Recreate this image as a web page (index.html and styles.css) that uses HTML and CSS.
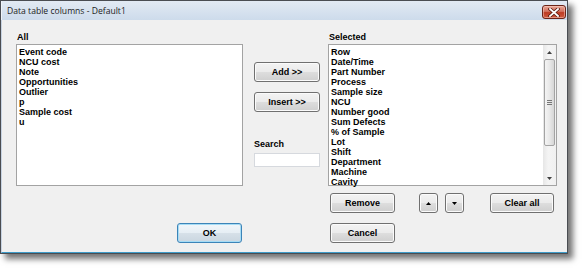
FILE: index.html
```html
<!DOCTYPE html>
<html>
<head>
<meta charset="utf-8">
<title>Data table columns</title>
<link rel="stylesheet" href="styles.css">
</head>
<body>
<div class="window">
  <div class="titlebar">
    <span class="title">Data table columns - Default1</span>
    <div class="close">
      <svg width="12" height="9" viewBox="0 0 12 9"><path d="M2 1 L10 8 M10 1 L2 8" stroke="#5a1a10" stroke-width="3.4" stroke-linecap="square"/><path d="M2 1 L10 8 M10 1 L2 8" stroke="#ffffff" stroke-width="1.8" stroke-linecap="square"/></svg>
    </div>
  </div>
  <div class="client">
    <div class="col-left">
      <div class="label">All</div>
      <div class="listbox left-list">
        <div class="item">Event code</div>
        <div class="item">NCU cost</div>
        <div class="item">Note</div>
        <div class="item">Opportunities</div>
        <div class="item">Outlier</div>
        <div class="item">p</div>
        <div class="item">Sample cost</div>
        <div class="item">u</div>
      </div>
      <button class="btn ok">OK</button>
    </div>
    <div class="col-mid">
      <button class="btn mid-btn add">Add &gt;&gt;</button>
      <button class="btn mid-btn insert">Insert &gt;&gt;</button>
      <div class="search-label">Search</div>
      <div class="search"></div>
    </div>
    <div class="col-right">
      <div class="label">Selected</div>
      <div class="listbox right-list">
        <div class="items">
          <div class="item">Row</div>
          <div class="item">Date/Time</div>
          <div class="item">Part Number</div>
          <div class="item">Process</div>
          <div class="item">Sample size</div>
          <div class="item">NCU</div>
          <div class="item">Number good</div>
          <div class="item">Sum Defects</div>
          <div class="item">% of Sample</div>
          <div class="item">Lot</div>
          <div class="item">Shift</div>
          <div class="item">Department</div>
          <div class="item">Machine</div>
          <div class="item">Cavity</div>
        </div>
        <div class="scrollbar">
          <div class="sb-arrow"><svg width="5" height="3" viewBox="0 0 5 3"><path d="M0 3 L2.5 0 L5 3 Z" fill="#404040"/></svg></div>
          <div class="sb-thumb"><span class="grip"></span><span class="grip"></span><span class="grip"></span></div>
          <div class="sb-track"></div>
          <div class="sb-arrow"><svg width="5" height="3" viewBox="0 0 5 3"><path d="M0 0 L5 0 L2.5 3 Z" fill="#404040"/></svg></div>
        </div>
      </div>
      <div class="row-buttons">
        <button class="btn remove">Remove</button>
        <button class="btn small up"><svg width="5" height="3" viewBox="0 0 5 3"><path d="M0 3 L2.5 0 L5 3 Z" fill="#000"/></svg></button>
        <button class="btn small down"><svg width="5" height="3" viewBox="0 0 5 3"><path d="M0 0 L5 0 L2.5 3 Z" fill="#000"/></svg></button>
        <button class="btn clear">Clear all</button>
      </div>
      <button class="btn cancel">Cancel</button>
    </div>
  </div>
</div>
</body>
</html>
```
FILE: styles.css
```css
* { box-sizing: border-box; }
html, body { margin: 0; padding: 0; background: #ffffff; }
body { width: 584px; height: 270px; overflow: hidden; }

.window {
  width: 568px;
  height: 254px;
  border: 1px solid #4a4d52;
  background: #f0f0f0;
  box-shadow: 5px 5px 6px rgba(0,0,0,0.55);
  display: flex;
  flex-direction: column;
}

.titlebar {
  height: 19px;
  flex: none;
  display: flex;
  align-items: center;
  background: linear-gradient(#e2eaf3, #cddbeb);
  border-left: 1px solid #eef3f9;
  padding-left: 5px;
}
.title {
  font-family: "Open Sans", "Noto Sans", sans-serif;
  font-size: 8.6px;
  color: #1c1c1c;
}
.close {
  margin-left: auto;
  margin-right: 1px;
  margin-top: 3px;
  width: 24px;
  height: 14px;
  border: 1px solid #6b2418;
  border-radius: 3px;
  background: linear-gradient(#e9a696 0%, #d27260 45%, #bd3b23 55%, #d05a40 100%);
  box-shadow: inset 0 0 0 1px rgba(255,220,210,0.45);
  display: flex;
  align-items: center;
  justify-content: center;
}

.client {
  flex: 1;
  display: flex;
  padding-left: 14px;
  border-left: 1px solid #c7d3e2;
  border-bottom: 1px solid #3d9bc8;
  font-family: "Liberation Sans", Arial, sans-serif;
  font-size: 9px;
  font-weight: bold;
  color: #000;
}

.label {
  height: 12px;
  line-height: 12px;
  margin-top: 11px;
  margin-bottom: 1px;
  padding-left: 1px;
}

.listbox {
  background: #ffffff;
  border: 1px solid #a3a3a3;
  height: 142px;
}
.item {
  line-height: 10px;
  height: 10px;
  white-space: nowrap;
}

.col-left {
  width: 227px;
  display: flex;
  flex-direction: column;
}
.left-list { padding: 2px 0 0 2px; }

.col-mid {
  width: 67px;
  margin-left: 10px;
  display: flex;
  flex-direction: column;
}

.col-right {
  width: 229px;
  margin-left: 8px;
  display: flex;
  flex-direction: column;
}
.right-list {
  display: flex;
}
.right-list .items {
  flex: 1;
  padding: 2px 0 0 2px;
}

.scrollbar {
  width: 13px;
  display: flex;
  flex-direction: column;
  background: linear-gradient(to right, #e6e6e6, #f4f4f4 40%, #f0f0f0);
}
.sb-arrow {
  height: 14px;
  display: flex;
  align-items: center;
  justify-content: center;
}
.sb-thumb {
  margin: 0 1px 0 1px;
  height: 87px;
  border: 1px solid #a3a3a3;
  border-radius: 2px;
  background: linear-gradient(to right, #f4f4f4, #e8e8e8 50%, #d6d6d6);
  display: flex;
  flex-direction: column;
  align-items: center;
  justify-content: center;
  gap: 1px;
}
.grip {
  width: 5px;
  height: 1px;
  background: #777;
}
.sb-track { flex: 1; }

.btn {
  font-family: "Liberation Sans", Arial, sans-serif;
  font-size: 9px;
  font-weight: bold;
  color: #000;
  height: 20px;
  padding: 0;
  border: 1px solid #707070;
  border-radius: 3px;
  background: linear-gradient(#f3f3f3 0%, #ebebeb 48%, #dddddd 52%, #cfcfcf 100%);
  box-shadow: inset 0 0 0 1px #fbfbfb;
  display: flex;
  align-items: center;
  justify-content: center;
}

.mid-btn { width: 66px; margin-left: 1px; }
.add { margin-top: 42px; }
.insert { margin-top: 10px; }

.search-label {
  margin-top: 26px;
  height: 12px;
  line-height: 12px;
  padding-left: 1px;
}
.search {
  margin-top: 3px;
  margin-left: 1px;
  width: 66px;
  height: 14px;
  background: #ffffff;
  border: 1px solid #d6d9de;
}

.row-buttons {
  display: flex;
  margin-top: 7px;
}
.remove { width: 65px; margin-left: 2px; }
.small { width: 19px; }
.up { margin-left: 24px; }
.down { margin-left: 7px; }
.clear { width: 64px; margin-left: 26px; }

.cancel { width: 65px; margin-left: 2px; margin-top: 10px; }

.ok {
  width: 65px;
  margin-top: 37px;
  margin-left: 161px;
  border-color: #3c84b8;
  box-shadow: inset 0 0 0 1px #a6dcf5;
  background: linear-gradient(#f1f6fa 0%, #e6eef4 48%, #d6e0e8 52%, #cad6e0 100%);
}
```
